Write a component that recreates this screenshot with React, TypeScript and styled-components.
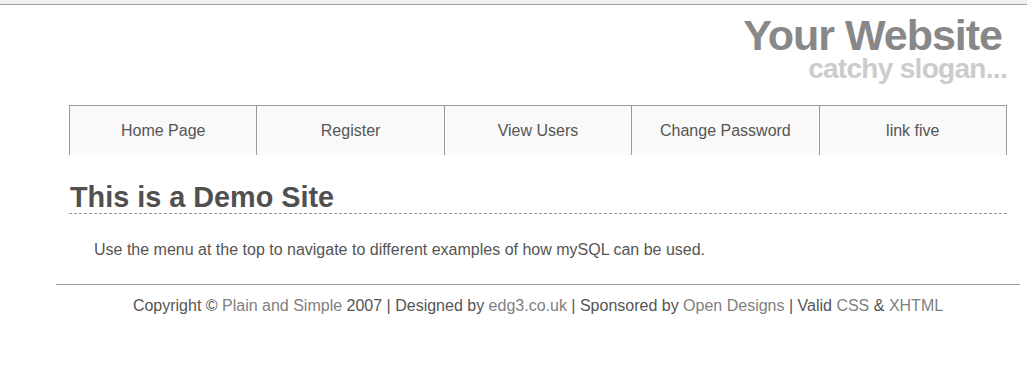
import React from "react";
import styled, { createGlobalStyle } from "styled-components";

const Global = createGlobalStyle`
  html, body { margin: 0; padding: 0; background: #fff; }
  body { font-family: "Liberation Sans", Arial, sans-serif; color: #555; }
`;

const TopStrip = styled.div`
  height: 4px;
  background: #f0f0f0;
  border-bottom: 1px solid #a3a3a3;
`;

const Page = styled.div`
  margin-left: 56px;
  width: 964px;
`;

const Inner = styled.div`
  padding: 0 13px;
`;

const Header = styled.header`
  display: flex;
  flex-direction: column;
  align-items: flex-end;
  padding-top: 10px;
`;

const Title = styled.h1`
  margin: 0;
  padding-right: 5px;
  font-size: 43px;
  line-height: 40px;
  font-weight: bold;
  letter-spacing: -1px;
  color: #888;
`;

const Slogan = styled.div`
  font-size: 28px;
  line-height: 27px;
  font-weight: bold;
  letter-spacing: -0.7px;
  color: #ccc;
`;

const Menu = styled.nav`
  margin-top: 23px;
  display: grid;
  grid-template-columns: repeat(5, 1fr);
  border-top: 1px solid #999;
  border-right: 1px solid #999;
`;

const MenuItem = styled.a`
  height: 49px;
  display: flex;
  align-items: center;
  justify-content: center;
  border-left: 1px solid #999;
  background: #f9f9f9;
  color: #555;
  font-size: 16px;
  text-decoration: none;
`;

const Heading = styled.h2`
  margin: 26px 0 0;
  padding: 0 0 0 1px;
  font-size: 28.8px;
  line-height: 32px;
  font-weight: bold;
  color: #505050;
  border-bottom: 1px dashed #999;
`;

const Para = styled.p`
  margin: 26px 0 0;
  padding-left: 25px;
  font-size: 16px;
  line-height: 20px;
  color: #555;
`;

const Rule = styled.hr`
  margin: 24px 0 0;
  border: 0;
  border-top: 1px solid #999;
  height: 0;
`;

const Footer = styled.footer`
  margin-top: 11px;
  text-align: center;
  font-size: 16px;
  line-height: 20px;
  color: #555;
`;

const FooterLink = styled.a`
  color: #808080;
  text-decoration: none;
`;

const links = ["Home Page", "Register", "View Users", "Change Password", "link five"];

export default function App() {
  return (
    <>
      <Global />
      <TopStrip />
      <Page>
        <Inner>
          <Header>
            <Title>Your Website</Title>
            <Slogan>catchy slogan...</Slogan>
          </Header>
          <Menu>
            {links.map((l) => (
              <MenuItem key={l} href="#">
                {l}
              </MenuItem>
            ))}
          </Menu>
          <Heading>This is a Demo Site</Heading>
          <Para>Use the menu at the top to navigate to different examples of how mySQL can be used.</Para>
        </Inner>
        <Rule />
        <Footer>
          Copyright © <FooterLink href="#">Plain and Simple</FooterLink> 2007 | Designed by{" "}
          <FooterLink href="#">edg3.co.uk</FooterLink> | Sponsored by{" "}
          <FooterLink href="#">Open Designs</FooterLink> | Valid <FooterLink href="#">CSS</FooterLink> &amp;{" "}
          <FooterLink href="#">XHTML</FooterLink>
        </Footer>
      </Page>
    </>
  );
}
